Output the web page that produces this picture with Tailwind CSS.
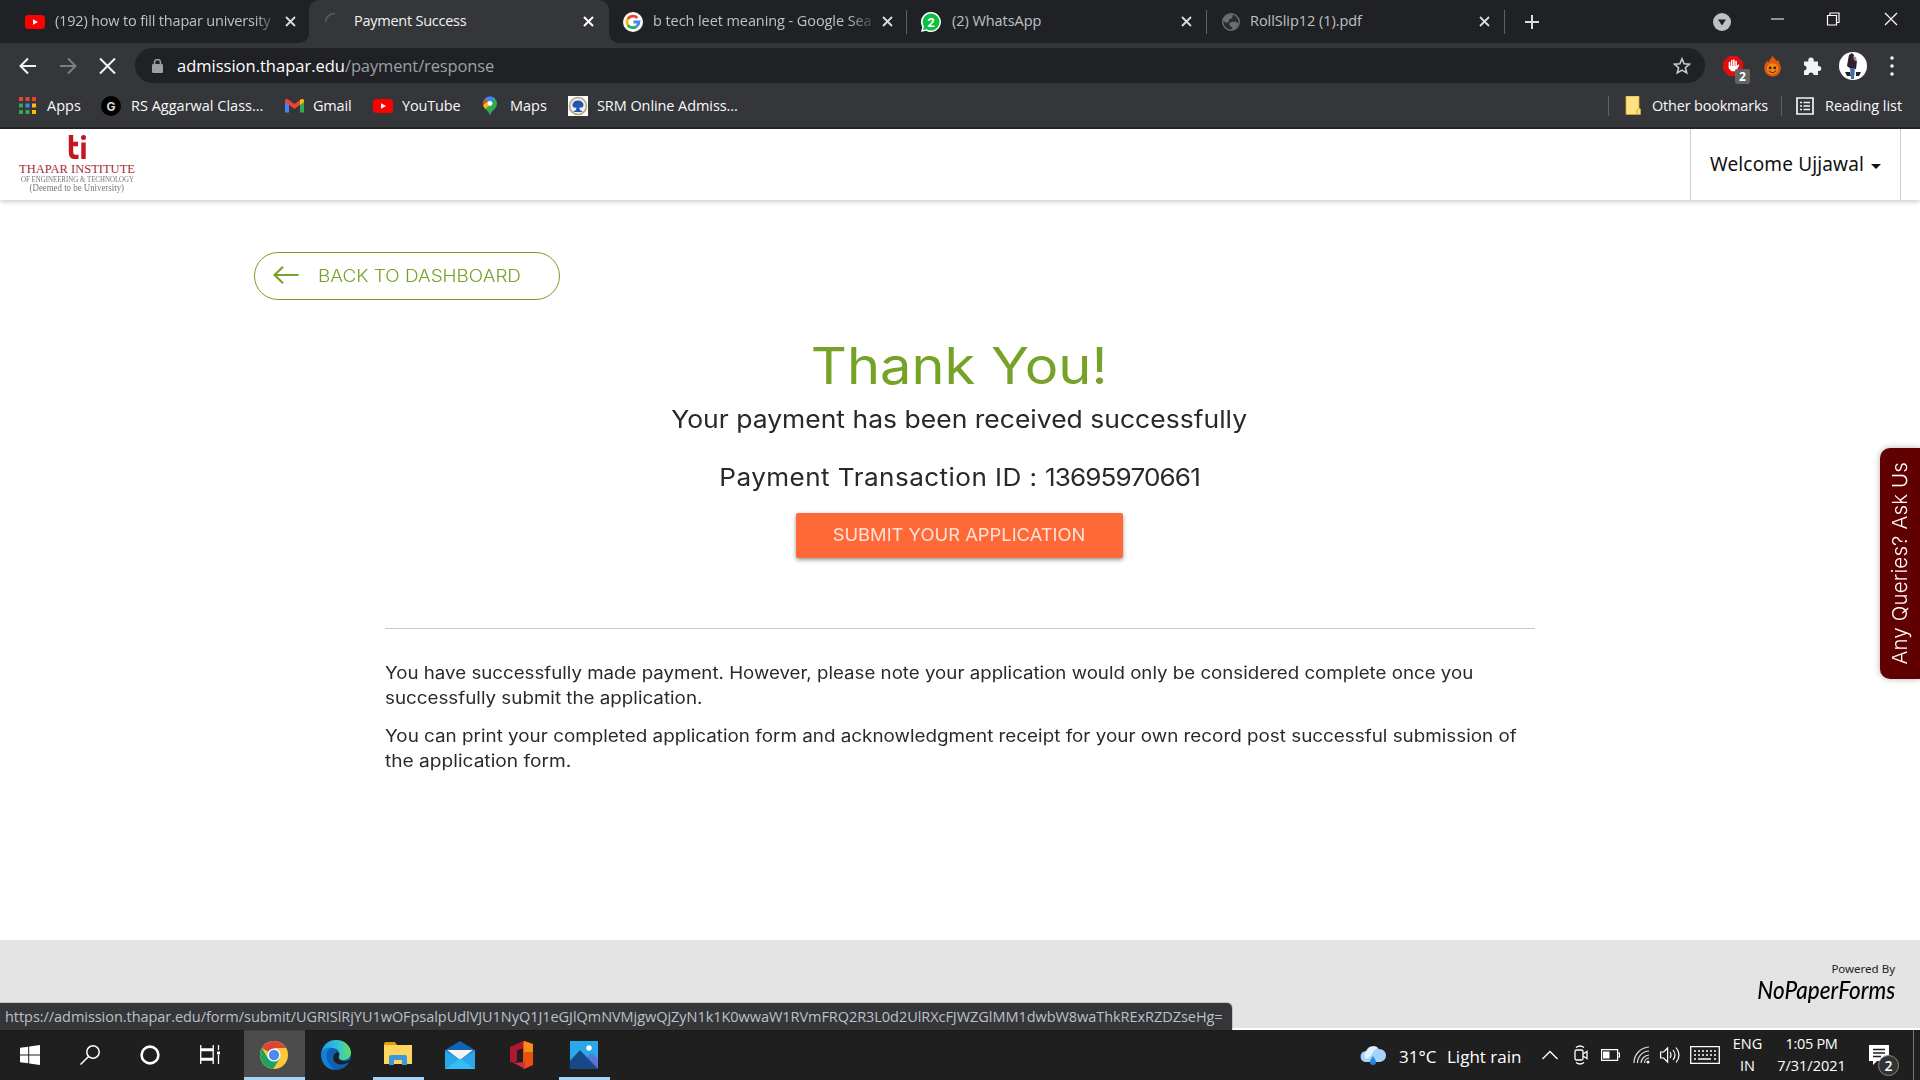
<!DOCTYPE html>
<html lang="en">
<head>
<meta charset="utf-8">
<title>Payment Success</title>
<script src="https://cdn.jsdelivr.net/npm/@tailwindcss/browser@4"></script>
</head>
<body class="w-[1920px] h-[1080px] overflow-hidden bg-white flex flex-col font-['Open_Sans',sans-serif] whitespace-nowrap">

<!-- Tab strip -->
<div class="h-[43px] shrink-0 bg-[#35363a] flex items-center text-[14.5px] leading-[40px] text-[#bdc1c6]">
  <div class="w-[309px] h-full flex items-center pl-[25px] rounded-br-[10px] bg-[#202124]">
    <svg class="w-5 h-[14px]" viewBox="0 0 20 14"><rect width="20" height="14" rx="3.5" fill="#f00"/><path d="M8 4.2v5.6L13 7z" fill="#fff"/></svg>
    <span class="ml-[10px] w-[219px] pb-[2px] tracking-[-0.18px] [mask-image:linear-gradient(to_right,#000_200px,transparent_224px)]">(192) how to fill thapar university</span>
    <svg class="ml-[11px] size-[11px]" viewBox="0 0 11 11" stroke="#dadce0" stroke-width="1.8"><path d="M1 1l9 9M10 1l-9 9"/></svg>
  </div>
  <div class="w-[300px] h-full bg-[#202124]">
    <div class="h-full flex items-center pl-[15px] bg-[#35363a] rounded-t-[10px] text-[#f1f3f4]">
      <svg class="size-5" viewBox="0 0 20 20" fill="none" stroke="#4a5570" stroke-width="2"><path d="M1.5 10A9 9 0 0 1 11 1.5"/></svg>
      <span class="ml-[10px] w-[219px] pb-[2px] tracking-[-0.25px]">Payment Success</span>
      <svg class="ml-[10px] size-[11px]" viewBox="0 0 11 11" stroke="#fff" stroke-width="2"><path d="M1 1l9 9M10 1l-9 9"/></svg>
    </div>
  </div>
  <div class="w-[299px] h-full flex items-center pl-[14px] bg-[#202124] rounded-bl-[10px]">
    <svg class="size-5" viewBox="0 0 20 20"><circle cx="10" cy="10" r="10" fill="#fff"/><g fill="none" stroke-width="2.8"><path d="M14.3 6A6 6 0 0 0 4.8 7" stroke="#ea4335"/><path d="M4.8 7a6 6 0 0 0 0 6" stroke="#fbbc05"/><path d="M4.8 13a6 6 0 0 0 9 1.2" stroke="#34a853"/><path d="M13.8 14.2A6 6 0 0 0 16 10H10.5" stroke="#4285f4"/></g></svg>
    <span class="ml-[10px] w-[219px] pb-[2px] tracking-[-0.08px] [mask-image:linear-gradient(to_right,#000_195px,transparent_225px)]">b tech leet meaning - Google Sea</span>
    <svg class="ml-[10px] size-[11px]" viewBox="0 0 11 11" stroke="#dadce0" stroke-width="1.8"><path d="M1 1l9 9M10 1l-9 9"/></svg>
    <i class="ml-[13px] w-px h-6 bg-[#5f6368]"></i>
  </div>
  <div class="w-[299px] h-full flex items-center pl-[13px] bg-[#202124]">
    <svg class="size-5" viewBox="0 0 20 20"><path d="M10 0a10 10 0 1 1-5 18.700L0 20l1.300-5A10 10 0 0 1 10 0z" fill="#fff"/><path d="M10 1.500a8.500 8.500 0 1 1-4.500 15.700L2 18l1-3.500A8.500 8.500 0 0 1 10 1.500z" fill="#0dbf42"/><text x="10" y="15" text-anchor="middle" font-size="13" font-weight="700" fill="#fff" font-family="Roboto">2</text></svg>
    <span class="ml-[11px] w-[218px] pb-[2px] tracking-[-0.05px]">(2) WhatsApp</span>
    <svg class="ml-[11px] size-[11px]" viewBox="0 0 11 11" stroke="#dadce0" stroke-width="1.8"><path d="M1 1l9 9M10 1l-9 9"/></svg>
    <i class="ml-[14px] w-px h-6 bg-[#5f6368]"></i>
  </div>
  <div class="w-[300px] h-full flex items-center pl-[15px] bg-[#202124]">
    <svg class="size-[18px]" viewBox="0 0 18 18"><circle cx="9" cy="9" r="8.3" fill="#2b2c30" stroke="#6b6e72" stroke-width="1.4"/><path d="M3 4l4-2.500 4 .5-1 3-3 1.500-.5 3L3 9.500 1 7zM9.500 9l4-.5 3 2-2 4-4 2.500-.5-3-2-1-1-2.500z" fill="#6b6e72"/></svg>
    <span class="ml-[10px] w-[219px] pb-[2px] tracking-[-0.05px]">RollSlip12 (1).pdf</span>
    <svg class="ml-[10px] size-[11px]" viewBox="0 0 11 11" stroke="#dadce0" stroke-width="1.8"><path d="M1 1l9 9M10 1l-9 9"/></svg>
    <i class="ml-[14px] w-px h-6 bg-[#5f6368]"></i>
  </div>
  <div class="grow h-full flex items-center bg-[#202124]">
    <svg class="ml-[17px] size-[16px]" viewBox="0 0 16 16" stroke="#dadce0" stroke-width="2"><path d="M8 1v14M1 8h14"/></svg>
    <svg class="ml-[173px] size-[18px]" viewBox="0 0 18 18"><circle cx="9" cy="9" r="9" fill="#bdc1c6"/><path d="M5 6.500h8L9 12.500z" fill="#202124"/></svg>
    <svg class="ml-[39px] mb-[6px] w-[128px] h-[14px]" viewBox="0 0 128 14" fill="none" stroke="#fff" stroke-width="1.2"><path d="M1 7h13M57.500 3.500h9v9.500h-9zM60 3V1h9v9.500h-2.500M115 1l12 12M127 1l-12 12"/></svg>
  </div>
</div>

<!-- Address bar -->
<div class="h-[45px] shrink-0 bg-[#35363a] flex items-center">
  <svg class="ml-[19px] w-[98px] h-[18px]" viewBox="0 0 98 18" fill="none" stroke-width="2"><path d="M17 9H1.500M9 1.500L1.500 9 9 16.500" stroke="#f1f3f4"/><path d="M41 9h15.500M49 1.500L56.500 9 49 16.500" stroke="#7c7e82"/><path d="M81 1.500l15 15M96 1.500l-15 15" stroke="#f1f3f4"/></svg>
  <div class="ml-[18px] w-[1570px] h-[35px] rounded-full bg-[#202124] flex items-center pl-[17px]">
    <svg class="w-[11px] h-[14px]" viewBox="0 0 11 14"><rect y="5" width="11" height="9" rx="1.2" fill="#9aa0a6"/><path d="M2.500 6V3.500a3 3 0 0 1 6 0V6" fill="none" stroke="#9aa0a6" stroke-width="1.5"/></svg>
    <span class="ml-[14px] mt-[1px] w-[1496px] text-[16.5px] text-[#9aa0a6] tracking-[-0.12px]"><span class="text-white tracking-normal">admission.thapar.edu</span>/payment/response</span>
    <svg class="size-[18px]" viewBox="0 0 18 18" fill="none" stroke="#c8cbcf" stroke-width="1.6"><path d="M9 1.800l2.100 5 5.400.4-4.100 3.500 1.300 5.200L9 13.100l-4.700 2.800 1.300-5.200L1.500 7.200l5.400-.4z"/></svg>
  </div>
  <div class="ml-[18px] relative w-[20px] h-[20px]">
    <svg class="size-[20px]" viewBox="0 0 20 20"><path d="M6 0h8l6 6v8l-6 6H6l-6-6V6z" fill="#e40d0d"/><path d="M6.500 11V6.500M8.700 10V4.500M10.900 10V4M13.100 11V5.500" stroke="#fff" stroke-width="1.600" stroke-linecap="round"/><path d="M5.700 10h8.200l1.600-1.800.8 1-3.200 6H8.500l-2.800-3z" fill="#fff"/></svg>
    <span class="absolute left-[12px] top-[13px] w-[15px] h-[15px] rounded-[2px] bg-[#636363] text-white text-[12px] leading-[15px] font-bold text-center">2</span>
  </div>
  <svg class="ml-[21px] w-[17px] h-[22px]" viewBox="0 0 18 22"><path d="M9 0c1 3 3.500 3.500 4.500 6l2-1.500c-.3 3 2.500 5 2.200 9C17.500 18.500 14 22 9 22S.5 18.500.3 13.500c-.2-4 2.200-5.500 2.400-8l2 1.500C5.500 4.500 8.500 3 9 0z" fill="#e2570f"/><ellipse cx="9" cy="14" rx="6" ry="6" fill="#f08a18"/><circle cx="6.500" cy="13" r="1.500" fill="#3d1c00"/><circle cx="11.500" cy="13" r="1.500" fill="#3d1c00"/><path d="M5 16q4 4 8 0" stroke="#3d1c00" fill="none"/></svg>
  <svg class="ml-[22px] size-[20px]" viewBox="0 0 20 20" fill="#f1f3f4"><path d="M1 5.500h4.500a2.800 2.800 0 1 1 5 0H15V10a2.600 2.600 0 1 1 0 5v4h-4.500a2.500 2.500 0 0 0-5 0H1v-4.500a2.500 2.500 0 0 0 0-5z"/></svg>
  <svg class="ml-[16px] size-[28px]" viewBox="0 0 28 28"><circle cx="14" cy="14" r="14" fill="#fff"/><path d="M6 20h5l1 4H8zM17 20h5l-2 4h-3z" fill="#222"/><path d="M10 3l3-2 2 2v4l3 2-1 8h-5l-4-3 1-6z" fill="#2a2430"/><path d="M14 4l3 1 1 5-3-2z" fill="#b98a6b"/><path d="M11 16h5l-1 11h-3z" fill="#3f6ea5"/></svg>
  <svg class="ml-[23px] w-[4px] h-[20px]" viewBox="0 0 4 20" fill="#f1f3f4"><circle cx="2" cy="2" r="1.8"/><circle cx="2" cy="10" r="1.8"/><circle cx="2" cy="18" r="1.8"/></svg>
</div>

<!-- Bookmarks bar -->
<div class="h-[41px] shrink-0 bg-[#35363a] border-b-2 border-[#242528] flex items-center text-[14.5px] text-[#f8f9fa] pb-1">
  <svg class="ml-[19px] size-[17px]" viewBox="0 0 17 17"><path d="M0 0h4v4H0zM6.500 0h4v4h-4zM13 0h4v4h-4z" fill="#ea4335"/><path d="M0 6.500h4v4H0zM0 13h4v4H0zM6.500 13h4v4h-4z" fill="#34a853"/><path d="M6.500 6.500h4v4h-4z" fill="#4285f4"/><path d="M13 6.500h4v4h-4zM13 13h4v4h-4z" fill="#fbbc05"/></svg>
  <span class="ml-[11px] w-[54px]">Apps</span>
  <svg class="size-5" viewBox="0 0 20 20"><circle cx="10" cy="10" r="10"/><text x="10" y="14.5" text-anchor="middle" font-size="12" font-weight="700" fill="#ddd" font-family="Inter">G</text></svg>
  <span class="ml-[10px] w-[154px]">RS Aggarwal Class...</span>
  <svg class="w-[19px] h-[14px]" viewBox="0 0 19 14"><path d="M0 2v11.500h4V5z" fill="#4285f4"/><path d="M15 5v8.500h4V2z" fill="#34a853"/><path d="M15 1v5l4-3V1.500C19 0 16.500-.5 15 1z" fill="#fbbc04"/><path d="M0 1.500C0 0 2.500-.5 4 1l5.500 4L15 1v5l-5.500 4L0 3z" fill="#ea4335"/></svg>
  <span class="ml-[9px] w-[60px] tracking-[-0.2px]">Gmail</span>
  <svg class="w-5 h-[14px]" viewBox="0 0 20 14"><rect width="20" height="14" rx="3.5" fill="#f00"/><path d="M8 4.200v5.600L13 7z" fill="#fff"/></svg>
  <span class="ml-[9px] w-[81px] tracking-[-0.15px]">YouTube</span>
  <svg class="w-[14px] h-[20px]" viewBox="0 0 14 19"><path d="M7 0a7 7 0 0 1 7 7c0 5-5 6-7 12C5 13 0 12 0 7a7 7 0 0 1 7-7z" fill="#34a853"/><path d="M7 0a7 7 0 0 0-5.500 2.700L7 7l5-5A7 7 0 0 0 7 0z" fill="#4285f4"/><path d="M1.500 2.700A7 7 0 0 0 .2 8.500L5 5z" fill="#ea4335"/><path d="M.2 8.500C.5 10 1.500 11.500 2.500 12.500L9 6 5 5z" fill="#fbbc04"/><circle cx="7" cy="7" r="2.400" fill="#fff"/></svg>
  <span class="ml-[13px] w-[58px]">Maps</span>
  <svg class="size-5" viewBox="0 0 20 20"><path d="M0 0h20v20H0z" fill="#fff"/><circle cx="10" cy="10" r="8.500" fill="#e8eef8" stroke="#b99f6d" stroke-width="1.5"/><path d="M4.500 9a5.500 4.500 0 0 1 11 0c0 2-2 3-4.300 2.500L12 14l3 2H5l3-2 .5-2.500C6 12 4.500 11 4.500 9z" fill="#2455a8"/></svg>
  <span class="ml-[9px] tracking-[-0.08px]">SRM Online Admiss...</span>
  <div class="ml-auto mr-[17px] flex items-center">
    <i class="w-px h-5 bg-[#5f6368]"></i>
    <svg class="ml-[16px] w-[16px] h-[19px]" viewBox="0 0 16 19"><path d="M1 0h13v12l1.500 1v5.500H1z" fill="#ffe083" stroke="#d7a92e" stroke-width=".8"/><path d="M12 18v-4l3-2" fill="none" stroke="#d7a92e"/></svg>
    <span class="ml-[11px] w-[129px] tracking-[-0.2px]">Other bookmarks</span>
    <i class="w-px h-5 bg-[#5f6368]"></i>
    <svg class="ml-[14px] size-[18px]" viewBox="0 0 18 18" fill="none" stroke="#f1f3f4" stroke-width="1.7"><path d="M1 1h16v16H1zM4 5.500h2M4 9h2M4 12.500h2M7.500 5.500H14M7.500 9H14M7.500 12.500H14"/></svg>
    <span class="ml-[11px] w-[78px] tracking-[-0.05px]">Reading list</span>
  </div>
</div>

<!-- Site header -->
<header class="h-[71px] shrink-0 bg-white flex shadow-[0_2px_5px_rgba(0,0,0,0.2)]">
  <div class="ml-[14px] w-[126px] flex flex-col items-center font-['Liberation_Serif',serif] text-[#777]">
    <svg class="mt-[6px] w-[18px] h-[24px]" viewBox="0 0 18 24" fill="none" stroke="#c3161f" stroke-width="4.4"><path d="M3 0v17q0 5 4 5h3.500M2 9h8M15.500 7.500V24"/><circle cx="15.500" cy="2.500" r="2.500" fill="#c3161f" stroke="none"/></svg>
    <span class="mt-[3px] text-[12.5px] leading-[14px] text-[#a52a30]">THAPAR INSTITUTE</span>
    <span class="text-[7.5px] leading-[8px] scale-x-92">OF ENGINEERING &amp; TECHNOLOGY</span>
    <span class="text-[9.5px] leading-[8px] scale-x-93">(Deemed to be University)</span>
  </div>
  <div class="ml-auto mr-[19px] w-[211px] border-x border-[#ccc] flex items-center pl-[19px] text-[19px] text-[#111] font-['Noto_Sans',sans-serif]">
    <span class="w-[161px] tracking-[0.15px]">Welcome Ujjawal</span>
    <svg class="w-[10px] h-[5px] mt-[3px]" viewBox="0 0 10 5"><path d="M0 0h10L5 5z" fill="#111"/></svg>
  </div>
</header>

<!-- Page content -->
<main class="h-[740px] shrink-0 flex flex-col font-['Inter',sans-serif] text-[#292929]">
  <a class="mt-[52px] ml-[254px] w-[306px] h-[48px] rounded-full border border-[#76a227] flex items-center pl-[18px] text-[17px] text-[#76a227] font-light">
    <svg class="w-[26px] h-[18px] mb-[2px]" viewBox="0 0 26 18" fill="none" stroke="#76a227" stroke-width="2.2"><path d="M25.500 9H1.500M10 .8L1.500 9l8.500 8.200"/></svg>
    <span class="ml-[19px] mt-[2px] origin-left scale-x-[1.112]">BACK TO DASHBOARD</span>
  </a>
  <div class="flex flex-col items-center pr-px">
    <h1 class="mt-[34px] h-[64px] leading-[64px] text-[51px] text-[#76a227] scale-x-[1.098]">Thank You!</h1>
    <p class="mt-[5px] leading-[32px] text-[24.5px] scale-x-[1.082]">Your payment has been received successfully</p>
    <p class="mt-[26px] leading-[32px] text-[24.5px] scale-x-[1.065]"><span class="tracking-[0.42px]">Payment Transaction ID :</span> <span class="tracking-[-0.8px]">13695970661</span></p>
    <button class="mt-[20px] w-[327px] h-[45px] pt-px rounded-[2px] bg-[#ff6937] text-[#ffe1d7] text-[17px] shadow-[0_2px_4px_rgba(0,0,0,0.4)]"><span class="inline-block scale-x-[1.08]">SUBMIT YOUR APPLICATION</span></button>
  </div>
  <div class="mt-[70px] ml-[385px] w-[1150px] border-t border-[#c8c8c8] pt-[32px] text-[17px] leading-[25px]">
    <div class="flex flex-col items-start">
      <span class="origin-left scale-x-[1.1]">You have successfully made payment. However, please note your application would only be considered complete once you</span>
      <span class="origin-left scale-x-[1.105]">successfully submit the application.</span>
    </div>
    <div class="mt-[13px] flex flex-col items-start">
      <span class="origin-left scale-x-[1.108]">You can print your completed application form and acknowledgment receipt for your own record post successful submission of</span>
      <span class="origin-left scale-x-[1.125]">the application form.</span>
    </div>
  </div>
</main>

<!-- Ask-us tab pinned to the window edge -->
<div class="absolute left-[1880px] top-[448px] w-[40px] h-[231px] rounded-l-[10px] bg-[#600000] shadow-[0_0_6px_rgba(0,0,0,0.3)] flex items-center justify-center">
  <span class="rotate-180 [writing-mode:vertical-rl] font-['Inter',sans-serif] font-light text-[20.5px] tracking-[0.15px] text-white">Any Queries? Ask Us</span>
</div>

<footer class="h-[88px] mb-[2px] shrink-0 bg-[#e4e4e4] flex flex-col items-end pr-[25px] pt-[20px] text-[#222] font-['Noto_Sans',sans-serif]">
  <span class="text-[11.5px] leading-[18px]">Powered By</span>
  <span class="-mt-[3px] text-[25px] leading-[28px] text-black font-['Lato',sans-serif] font-medium italic origin-right scale-x-90">NoPaperForms</span>
</footer>

<!-- Link status bubble -->
<div class="absolute left-0 top-[1003px] w-[1232px] h-[27px] rounded-tr-[5px] bg-[#35363a] ring-1 ring-black/15 pl-[5px] text-[14.5px] leading-[27px] tracking-[-0.048px] text-[#bdc1c6]">https://admission.thapar.edu/form/submit/UGRISlRjYU1wOFpsalpUdlVJU1NyQ1J1eGJlQmNVMjgwQjZyN1k1K0wwaW1RVmFRQ2R3L0d2UlRXcFJWZGlMM1dwbW8waThkRExRZDZseHg=</div>

<!-- Taskbar -->
<div class="h-[50px] shrink-0 bg-[#1f1f1f] flex items-center text-white">
  <svg class="ml-[20px] size-[20px]" viewBox="0 0 20 20" fill="#fff"><path d="M0 2.800l8.200-1.100v7.800H0zM9.200 1.500L20 0v9.500H9.200zM0 10.500h8.200v7.800L0 17.200zM9.200 10.500H20V20L9.200 18.500z"/></svg>
  <svg class="ml-[40px] size-[20px]" viewBox="0 0 20 20" fill="none" stroke="#fff" stroke-width="1.5"><circle cx="13" cy="7" r="6.200"/><path d="M8.500 11.500L.5 19.500"/></svg>
  <svg class="ml-[40px] size-[20px]" viewBox="0 0 20 20" fill="none" stroke="#fff" stroke-width="2.6"><circle cx="10" cy="10" r="8.400"/></svg>
  <svg class="ml-[40px] size-[20px]" viewBox="0 0 20 20" fill="none" stroke="#fff" stroke-width="1.3"><path d="M.7 0v4h12.500V0M.7 19v-4h12.500v4M.7 5.500h12.500v8H.7zM18.500 0v5M18.500 10v9"/><path d="M17 6.500h3v3h-3z" fill="#fff" stroke="none"/></svg>
  <div class="ml-[24px] w-[61px] h-full bg-[#4c4c4c] border-b-3 border-[#a3d3f7] flex justify-center items-center">
    <svg class="size-[28px] mt-[3px] mr-px" viewBox="0 0 28 28"><circle cx="14" cy="14" r="14" fill="#fbc93a"/><path d="M14 14L1.900 7A14 14 0 0 1 26.100 7H14z" fill="#db4437"/><path d="M1.900 7A14 14 0 0 0 13 27.900L20 17.500 14 14 8 17.500z" fill="#1da462"/><circle cx="14" cy="14" r="6.600" fill="#fff"/><circle cx="14" cy="14" r="5.200" fill="#4a8af4"/></svg>
  </div>
  <svg class="ml-[16px] size-[30px]" viewBox="0 0 30 30"><defs><linearGradient id="edgeTop"><stop stop-color="#1d9fe0"/><stop offset=".55" stop-color="#2fc3d8"/><stop offset="1" stop-color="#66e05a"/></linearGradient></defs><circle cx="15" cy="15" r="15" fill="#0f5fb4"/><path d="M.3 13C2 4 8 0 15 0c9 0 15 6.500 15 12.500 0 5-4 7.500-8 7.500-3.500 0-5-1.500-4-3C20 13 17 8 11 8 6 8 2 10 .3 13z" fill="url(#edgeTop)"/><path d="M.3 13C2 8 7 7.500 10 7.500c-4 3-5 7-4 12 1 4 4 8 8 10.400C4 29 0 22 .3 13z" fill="#1481d8"/><path d="M12.500 16c-1.500 5 3 9 8 8.500 3-.2 5-1 7.500-2.500l1 .5a15 15 0 0 0 1-3c-5 3-12 2-12.500-2.500.5-2 .5-3.500-.5-5-2 0-4 2-4.500 4z" fill="#1f1f1f"/></svg>
  <div class="ml-[22px] w-[51px] h-full border-b-3 border-[#a3d3f7] flex justify-center items-center">
    <svg class="w-[28px] h-[24px] mr-[2px]" viewBox="0 0 28 24"><path d="M0 2q0-2 2-2h9l2 3H0z" fill="#e3a008"/><path d="M0 3h28v19H0z" fill="#ffd55e"/><path d="M5 23v-8q0-2 2-2h14q2 0 2 2v8h-5v-5h-8v5z" fill="#3a97e0"/></svg>
  </div>
  <svg class="ml-[21px] w-[30px] h-[28px]" viewBox="0 0 30 28"><path d="M0 9L15 0l15 9v19H0z" fill="#0f64b8"/><path d="M2 9h26L15 19z" fill="#f4f4f4"/><path d="M0 9l15 10L0 28zM30 9L15 19l15 9z" fill="#2aa7ea"/><path d="M0 28l15-10.500L30 28z" fill="#36bdf5"/></svg>
  <svg class="ml-[35px] w-[24px] h-[28px]" viewBox="0 0 24 28"><path d="M0 6L13 0l2 1v6l-8 2v10l-2 3-5-1z" fill="#b0182d"/><path d="M14 0l9 3v21l-9 4-1-1V1z" fill="#e8500e"/><path d="M14 0l9 3v8h-9z" fill="#f88b1a"/><path d="M4 22l11-1v7z" fill="#e02742"/></svg>
  <div class="ml-[25px] w-[51px] h-full border-b-3 border-[#a3d3f7] flex justify-center items-center">
    <svg class="size-[28px] mt-[3px] mr-px" viewBox="0 0 28 28"><path d="M0 0h28v28H0z" fill="#2aa9ea"/><path d="M14 19l8-7 6 6v10h-6z" fill="#5b74d6"/><path d="M0 20L10 9l18 19H0z" fill="#154a86"/><circle cx="19" cy="7" r="2.700" fill="#fff"/></svg>
  </div>
  <svg class="ml-[750px] w-[26px] h-[20px]" viewBox="0 0 26 20"><path d="M6 17a5.500 5.500 0 0 1 0-11A7.500 7.500 0 0 1 19 4a6.500 6.500 0 0 1 1 13z" fill="#a5d3fb"/><path d="M6 14a5 5 0 0 1 1-8 7 7 0 0 1 11-3c-6 1-4 8-12 11z" fill="#e3f1fe"/><path d="M13 11q-3 4.500-3 6a3 3 0 0 0 6 0q0-1.500-3-6z" fill="#2b84e0"/></svg>
  <span class="ml-[13px] mt-[3px] w-[48px] text-[17px]">31°C</span>
  <span class="mt-[3px] w-[95px] text-[17px]">Light rain</span>
  <svg class="w-[16px] h-[10px]" viewBox="0 0 16 10" fill="none" stroke="#fff" stroke-width="1.4"><path d="M.5 9L8 1.500 15.500 9"/></svg>
  <svg class="ml-[16px] w-[14px] h-[20px]" viewBox="0 0 14 20" fill="none" stroke="#fff" stroke-width="1.3"><rect x="1" y="5" width="8" height="10" rx="1.5"/><path d="M9 9l4-2.500v7L9 11M2 2.500q4-3 8 0M2 17.500q4 3 8 0"/></svg>
  <svg class="ml-[13px] w-[19px] h-[12px]" viewBox="0 0 19 12"><path d="M.6.600h16v10.800H.6zM17 4h1.500v4H17" fill="none" stroke="#fff" stroke-width="1.2"/><path d="M2 2.500h6.500v7H2z" fill="#fff"/></svg>
  <svg class="ml-[13px] w-[17px] h-[18px]" viewBox="0 0 17 18" fill="none" stroke="#ddd" stroke-width="1.2"><path d="M1 17A16 16 0 0 1 16 1M4.500 17A12 12 0 0 1 16 5M8 17a8.500 8.500 0 0 1 8-8M11.500 17a5 5 0 0 1 4.500-5"/><circle cx="15" cy="16" r="1.500" fill="#fff" stroke="none"/></svg>
  <svg class="ml-[10px] w-[20px] h-[18px]" viewBox="0 0 20 18" fill="none" stroke="#fff" stroke-width="1.2"><path d="M.6 6v6h3l4 4V2l-4 4zM10 6q2 3 0 6M13 4q4 5 0 10M16 1.500q6 7.500 0 15"/></svg>
  <svg class="ml-[10px] w-[30px] h-[18px]" viewBox="0 0 30 18" fill="none" stroke="#fff" stroke-width="1.3"><path d="M.7.700h28.600v16.600H.7z"/><path d="M4 5h22M4 9h22" stroke-dasharray="2 2"/><path d="M4 13h2M8 13h13M24 13h2"/></svg>
  <div class="ml-[10px] w-[35px] flex flex-col items-center text-[14.5px] leading-[22.5px]"><span>ENG</span><span>IN</span></div>
  <div class="ml-[8px] w-[77px] flex flex-col items-center text-[14.5px] leading-[22.5px]"><span class="tracking-[-0.3px]">1:05 PM</span><span>7/31/2021</span></div>
  <div class="ml-[19px] relative w-[20px] h-[20px]">
    <svg class="size-[20px]" viewBox="0 0 20 20"><path d="M0 0h20v16H8l-4 4v-4H0z" fill="#fff"/><path d="M4 4.500h12M4 8h12M4 11.500h8" stroke="#1f1f1f" stroke-width="1.4"/></svg>
    <span class="absolute left-[9px] top-[10px] size-[21px] rounded-full border border-[#8a8a8a] bg-[#333] text-[14px] leading-[19px] font-semibold text-center">2</span>
  </div>
  <i class="ml-[24px] w-px h-full bg-[#777]"></i>
</div>
</body>
</html>
